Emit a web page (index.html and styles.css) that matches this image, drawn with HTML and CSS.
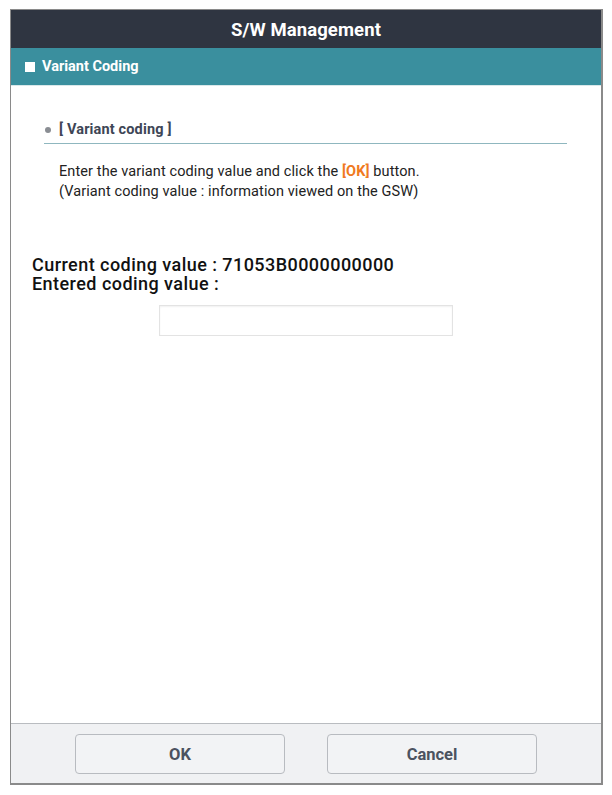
FILE: index.html
```html
<!DOCTYPE html>
<html>
<head>
<meta charset="utf-8">
<link rel="stylesheet" href="styles.css">
</head>
<body>
<div class="frame">
  <div class="titlebar">S/W Management</div>
  <div class="subbar"><span class="sq"></span>Variant Coding</div>
  <div class="content">
    <div class="section">
      <div class="sec-title"><span class="dot"></span>[ Variant coding ]</div>
      <div class="desc">
        <p>Enter the variant coding value and click the <span class="hl">[OK]</span> button.</p>
        <p>(Variant coding value : information viewed on the GSW)</p>
      </div>
    </div>
    <div class="values">
      <p>Current coding value : 71053B0000000000</p>
      <p>Entered coding value :</p>
    </div>
    <div class="input-row"><div class="input"></div></div>
  </div>
  <div class="footer">
    <button class="btn">OK</button>
    <button class="btn">Cancel</button>
  </div>
</div>
</body>
</html>
```

FILE: styles.css
```css
* { box-sizing: border-box; }
html, body { margin: 0; padding: 0; background: #fff; }
body { font-family: Roboto, "Liberation Sans", Arial, sans-serif; padding: 9px 9px 10px 10px; }
p { margin: 0; }
.frame {
  width: 593px;
  height: 776px;
  border: 1px solid #8a8a8a;
  border-right-width: 2px;
  border-bottom-width: 2px;
  display: flex;
  flex-direction: column;
}
.titlebar {
  height: 38px;
  background: #2f3541;
  color: #fff;
  font-size: 18.5px;
  font-weight: 700;
  letter-spacing: 0.1px;
  display: flex;
  align-items: center;
  justify-content: center;
  padding-top: 2px;
}
.subbar {
  height: 38px;
  background: #3a8f9e;
  color: #fff;
  font-size: 14.5px;
  font-weight: 700;
  display: flex;
  align-items: center;
  padding-left: 14px;
  border-bottom: 1px solid #d9e8ea;
}
.sq { width: 10px; height: 10px; background: #fff; margin-right: 7px; }
.content { flex: 1; background: #fff; }
.section { padding: 35px 34px 0 33px; }
.sec-title {
  display: flex;
  align-items: center;
  font-size: 14.5px;
  font-weight: 700;
  letter-spacing: 0.15px;
  color: #3e4656;
  padding: 0 0 5px 1px;
  border-bottom: 1px solid #8fb7bf;
}
.dot { width: 6px; height: 6px; border-radius: 50%; background: #8a8d93; margin-right: 8px; }
.desc { padding: 18px 0 0 15px; font-size: 14.5px; letter-spacing: 0.1px; line-height: 20px; color: #222; }
.hl { color: #f07a1f; font-weight: 700; }
.values { padding: 53px 0 0 21px; font-size: 18px; letter-spacing: 0.45px; font-weight: 500; color: #111; line-height: 19px; }
.input-row { padding: 12px 0 0 148px; }
.input { width: 294px; height: 31px; border: 1px solid #e3e3e3; box-shadow: inset 0 1px 2px rgba(0,0,0,0.06); }
.footer {
  height: 60px;
  background: #f0f1f3;
  border-top: 1px solid #b9bcc0;
  display: flex;
  justify-content: center;
  gap: 42px;
  padding-top: 10px;
}
.btn {
  width: 210px;
  height: 40px;
  border: 1px solid #b8bbc0;
  border-radius: 4px;
  background: #f2f3f5;
  font-family: Roboto, "Liberation Sans", Arial, sans-serif;
  font-size: 16.5px;
  font-weight: 700;
  color: #4b5260;
}
```
